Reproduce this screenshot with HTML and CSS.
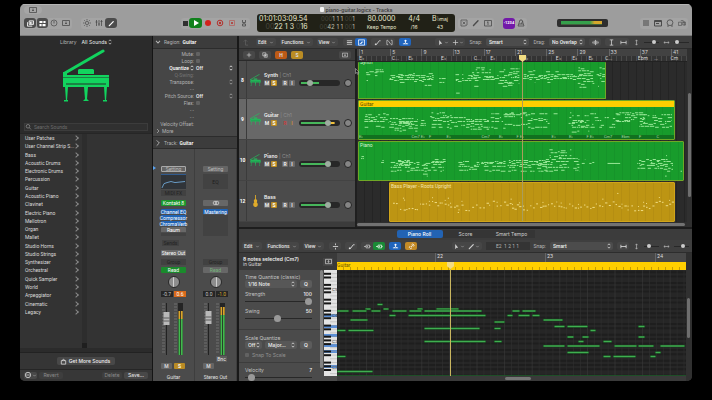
FILE: index.html
```html
<!DOCTYPE html>
<html lang="en">
<head>
<meta charset="utf-8">
<title>piano-guitar.logicx - Tracks</title>
<link rel="stylesheet" href="styles.css">
</head>
<body>
<svg class="sprite" aria-hidden="true">
  <symbol id="piano" viewBox="0 0 48 54"><path d="M3 24 41 2" stroke="currentColor" stroke-width="3" stroke-linecap="round"/><path fill="currentColor" d="M1 23h4v3H1zM16 21l1-1h14l1 1v4H16zM1 26h46v12H1zM3 38h3l-1 14H4zM22 38h4l-1 12 2 2h-6l2-2zM42 38h3l-1 14h-1zM2 51h4v1.500H2zM41 51h4v1.500h-4z"/><path stroke="#24302a" d="M4 35h40" stroke-width="1.200"/><path stroke="#24302a" d="M1 28.500h46" stroke-width=".5"/></symbol>
  <symbol id="bass" viewBox="0 0 10 14"><path fill="currentColor" d="M4.500 0h1v5C7.500 5 7 8 6.400 8.500 8.500 10 8 14 5 14S1.500 10 3.600 8.500C3 8 2.500 5 4.500 5z"/></symbol>
  <symbol id="updown" viewBox="0 0 4 6"><path d="M.7 2.200 2 .8l1.300 1.400M.7 3.800 2 5.200l1.300-1.400" fill="none" stroke="currentColor" stroke-width=".7"/></symbol>
  <symbol id="down" viewBox="0 0 6 6"><path d="M1.500 2.200 3 3.800l1.500-1.600" fill="none" stroke="currentColor" stroke-width=".8"/></symbol>
  <symbol id="right" viewBox="0 0 4 6"><path d="M1 1l2 2-2 2" fill="none" stroke="currentColor" stroke-width=".7"/></symbol>
  <symbol id="inbox" viewBox="0 0 8 8"><path d="M.5 1.500h7v5h-7zM4 2.500v2.500M3 4l1 1 1-1" fill="none" stroke="currentColor" stroke-width=".8"/></symbol>
  <symbol id="library" viewBox="0 0 8 8"><path d="M2.500 1h5v4h-5z" fill="none" stroke="currentColor"/><path d="M.5 2.500v4.500h5.500M4 2v2.500M5.500 2v2.500" fill="none" stroke="currentColor"/></symbol>
  <symbol id="inspector" viewBox="0 0 8 8"><path d="M.5 1h3.500v2.500H.5zM5 1h2.500v2.500H5zM.5 4.500H3V7H.5zM4 4.500h3.500V7H4z" fill="currentColor"/></symbol>
  <symbol id="clock" viewBox="0 0 8 8"><circle cx="4" cy="4" r="3" fill="none" stroke="currentColor" stroke-width=".7"/><path d="M4 2v2.500" stroke="currentColor" stroke-width=".8"/></symbol>
  <symbol id="sun" viewBox="0 0 8 8"><circle cx="4" cy="4" r="1.600" fill="none" stroke="currentColor" stroke-width=".7"/><path d="M4 0v1.500M4 6.500V8M0 4h1.500M6.500 4H8M1.200 1.200l1 1M5.800 5.800l1 1M1.200 6.800l1-1M5.800 2.200l1-1" stroke="currentColor" stroke-width=".7"/></symbol>
  <symbol id="mixer" viewBox="0 0 8 8"><path d="M1.500 1v6M4 1v6M6.500 1v6M.5 3h2M3 5h2M5.500 2.500h2" stroke="currentColor" stroke-width=".8"/></symbol>
  <symbol id="pencil" viewBox="0 0 8 8"><path d="M1.500 6.500 6 1.800" stroke="currentColor" stroke-width="1.400" stroke-linecap="round"/></symbol>
  <symbol id="metronome" viewBox="0 0 8 8"><path d="M3 1h2l2 6H1zM4 5l2-3M2 5h4" fill="none" stroke="currentColor" stroke-width=".8"/></symbol>
  <symbol id="tuner" viewBox="0 0 8 8"><path d="M2.500 1v2.500h3V1M4 3.500V5M2.500 7V5h3v2z" fill="none" stroke="currentColor" stroke-width=".8"/></symbol>
  <symbol id="clear" viewBox="0 0 8 8"><path d="M1 1h6v5L5 7H1zM2.700 2.700l2.600 2.600M5.300 2.700 2.700 5.300" fill="none" stroke="currentColor" stroke-width=".7"/></symbol>
  <symbol id="lines" viewBox="0 0 8 8"><path d="M1 2h6M1 4h6M1 6h6" stroke="currentColor"/></symbol>
  <symbol id="blocks" viewBox="0 0 8 8"><path d="M.5 1h7v6h-7z" fill="none" stroke="currentColor" stroke-width=".9"/><path d="M2 5h2V3.500h2" stroke="currentColor" fill="none"/></symbol>
  <symbol id="note" viewBox="0 0 8 8"><path d="M.5 1.500h7v5.500h-7zM.5 2.500h7M2 4.500h3" fill="none" stroke="currentColor"/></symbol>
  <symbol id="solo" viewBox="0 0 8 8"><path d="M.5 1.500h7v5.500h-7zM4 2.500v3.500M3 3.200h1" fill="none" stroke="currentColor" stroke-width=".8"/></symbol>
  <symbol id="loop" viewBox="0 0 8 8"><circle cx="4" cy="3.700" r="2.900" fill="none" stroke="currentColor" stroke-width=".8"/><path d="M1 7h2M5 7h2" stroke="currentColor" stroke-width=".8"/></symbol>
  <symbol id="media" viewBox="0 0 10 8"><path d="M.5 3h4v4h-4zM3.500 1h3v3M6 3h3.500v3.500H6zM8 2v5" fill="none" stroke="currentColor" stroke-width=".8"/></symbol>
  <symbol id="curve" viewBox="0 0 8 8"><path d="M1 6h2l3-4h1.500" fill="none" stroke="currentColor" stroke-width="1"/><circle cx="2" cy="6" r="1" fill="currentColor"/></symbol>
  <symbol id="up" viewBox="0 0 8 8"><path d="M2 3l2-2 2 2M4 1v6h3" fill="none" stroke="currentColor" stroke-width=".8"/></symbol>
  <symbol id="flex" viewBox="0 0 8 8"><path d="M2.500 1.500H1v5h1.500M5.500 1.500H7v5H5.500M2.500 2l3 4" fill="none" stroke="currentColor" stroke-width=".8"/></symbol>
  <symbol id="catch" viewBox="0 0 8 8"><circle cx="4" cy="2" r="1.200" fill="currentColor"/><path d="M4 2v2M1 5.500h6M2.500 5.500 4 4l1.500 1.500" stroke="currentColor" stroke-width=".9" fill="none"/></symbol>
  <symbol id="pointer" viewBox="0 0 8 8"><path d="M2.500 1v6l1.500-1.700h2z" fill="currentColor"/></symbol>
  <symbol id="cross" viewBox="0 0 8 8"><path d="M4 1v6M1 4h6" stroke="currentColor" stroke-width=".8"/></symbol>
  <symbol id="collapse" viewBox="0 0 8 8"><path d="M1 4h6M4 .5v2M4 5.500v2" stroke="currentColor" stroke-width=".9"/></symbol>
  <symbol id="wave" viewBox="0 0 8 8"><path d="M1 3v2M2.500 2v4M4 1v6M5.500 2v4M7 3v2" stroke="currentColor" stroke-width=".8"/></symbol>
  <symbol id="ibeam" viewBox="0 0 8 8"><path d="M2 1h4M2 7h4M4 1v6" stroke="currentColor" stroke-width=".9"/></symbol>
  <symbol id="hfit" viewBox="0 0 8 8"><path d="M1 2v4M7 2v4M1 4h6" stroke="currentColor" stroke-width=".9"/></symbol>
  <symbol id="vert" viewBox="0 0 8 8"><path d="M4 1v6M2.800 2.500 4 1l1.200 1.500M2.800 5.500 4 7l1.200-1.500" fill="none" stroke="currentColor" stroke-width=".8"/></symbol>
  <symbol id="horiz" viewBox="0 0 8 8"><path d="M1 4h6M2.500 2.800 1 4l1.500 1.200M5.500 2.800 7 4 5.500 5.200" fill="none" stroke="currentColor" stroke-width=".8"/></symbol>
  <symbol id="midi" viewBox="0 0 10 8"><path d="M3 2h5v4H3z" fill="none" stroke="currentColor"/><path d="M0 4h3M5 3v2M8 4h1.500" stroke="currentColor"/></symbol>
  <symbol id="link" viewBox="0 0 8 8"><path d="M3.500 4.500l2-2M2.500 3.500l-1 1.500 1.500 1.500 1.500-1M4 2l1.500-1L7 2.500 6 4" fill="none" stroke="currentColor" stroke-width=".9"/></symbol>
  <symbol id="search" viewBox="0 0 8 8"><circle cx="3" cy="3.300" r="1.800" fill="none" stroke="currentColor" stroke-width=".7"/><path d="M4.300 4.600 6 6.500" stroke="currentColor" stroke-width=".7"/></symbol>
  <symbol id="bag" viewBox="0 0 8 8"><path d="M1.500 3h5v4h-5zM2.800 3c0-2 2.400-2 2.400 0" fill="none" stroke="currentColor" stroke-width=".8"/></symbol>
  <symbol id="more" viewBox="0 0 8 8"><circle cx="4" cy="4" r="2.700" fill="none" stroke="currentColor" stroke-width=".7"/><path d="M2.500 4h3" stroke="currentColor" stroke-dasharray=".8 .4"/></symbol>
  <symbol id="copy" viewBox="0 0 8 8"><path d="M1 1h4v4H1zM3 3h4v4H3zM5 4v2M4 5h2" fill="none" stroke="currentColor" stroke-width=".8"/></symbol>
</svg>

<div class="window">
  <header class="titlebar">
    <div class="title-row">
      <button class="proxy" aria-label="Account"><svg class="i"><use href="#inbox"/></svg></button>
      <h1><span class="doc"></span>piano-guitar.logicx - Tracks</h1>
    </div>
    <div class="controlbar">
      <div class="group views">
        <button class="on" aria-label="Library"><svg class="i"><use href="#library"/></svg></button>
        <button class="on" aria-label="Inspector"><svg class="i"><use href="#inspector"/></svg></button>
        <button aria-label="Quick Help"><svg class="i"><use href="#clock"/></svg></button>
        <button aria-label="Toolbar"><svg class="i"><use href="#inbox"/></svg></button>
      </div>
      <div class="group panes">
        <button aria-label="Smart Controls"><svg class="i"><use href="#sun"/></svg></button>
        <button aria-label="Mixer"><svg class="i"><use href="#mixer"/></svg></button>
        <button class="on" aria-label="Editors"><svg class="i"><use href="#pencil"/></svg></button>
      </div>
      <div class="group transport">
        <button class="halt" aria-label="Stop"><span class="stop"></span></button>
        <button class="play" aria-label="Play"><svg class="i" viewBox="0 0 8 8"><path d="M2 1l5 3-5 3z" fill="#fff"/></svg></button>
        <button aria-label="Record"><span class="rec"></span></button>
        <button aria-label="Allow Quick Punch-In"><svg class="i" viewBox="0 0 8 8"><circle cx="4" cy="4" r="2.800" fill="none" stroke="#b3312c"/><circle cx="4" cy="4" r="1.200" fill="#b3312c"/></svg></button>
        <button aria-label="Capture"><svg class="i" viewBox="0 0 8 8"><path d="M1.500 1.500h5v5h-5z" fill="none" stroke="#b46461" stroke-width=".8"/><circle cx="4" cy="4" r="1" fill="#b3312c"/></svg></button>
        <button aria-label="Tuner"><svg class="i"><use href="#tuner"/></svg></button>
      </div>
      <div class="lcd">
        <div class="pos"><b>01:01:03:09.54</b><b class="beats"><i>00</i>22 1 3 <i>0</i>16</b></div>
        <div class="loc"><span><i>000</i>1 1 1 <i>00</i>1</span><span><i>00</i>42 1 1 <i>00</i>1</span></div>
        <div class="cell"><b>80.0000</b><small>Keep Tempo</small></div>
        <div class="cell"><b>4/4</b><small>/16</small></div>
        <div class="cell"><b>B♭<small>maj</small></b><small>43</small></div>
        <svg class="i"><use href="#down"/></svg>
      </div>
      <div class="group modes">
        <button aria-label="Replace"><svg class="i"><use href="#clear"/></svg></button>
        <button aria-label="Pencil"><svg class="i"><use href="#pencil"/></svg></button>
        <button aria-label="Solo"><svg class="i"><use href="#solo"/></svg></button>
      </div>
      <div class="group count">
        <button class="countin">‹1234</button>
        <button aria-label="Metronome"><svg class="i"><use href="#metronome"/></svg></button>
      </div>
      <div class="master"><span></span></div>
      <div class="group right">
        <button aria-label="List"><svg class="i"><use href="#lines"/></svg></button>
        <button aria-label="Note Pad"><svg class="i"><use href="#note"/></svg></button>
        <button aria-label="Loops"><svg class="i"><use href="#loop"/></svg></button>
        <button aria-label="Browsers"><svg class="i"><use href="#media"/></svg></button>
      </div>
    </div>
  </header>

  <div class="body">
    <aside class="library">
      <div class="lib-head"><span>Library</span><button>All Sounds <svg class="ud"><use href="#updown"/></svg></button></div>
      <svg class="piano-art"><use href="#piano"/></svg>
      <label class="search"><svg class="i"><use href="#search"/></svg><input type="search" placeholder="Search Sounds" aria-label="Search Sounds"></label>
      <div class="browser">
        <ul>
          <li>User Patches</li><li>User Channel Strip S...</li><li>Bass</li><li>Acoustic Drums</li><li>Electronic Drums</li><li>Percussion</li><li>Guitar</li><li>Acoustic Piano</li><li>Clavinet</li><li>Electric Piano</li><li>Mellotron</li><li>Organ</li><li>Mallet</li><li>Studio Horns</li><li>Studio Strings</li><li>Synthesizer</li><li>Orchestral</li><li>Quick Sampler</li><li>World</li><li>Arpeggiator</li><li>Cinematic</li><li>Legacy</li>
        </ul>
        <div class="gutter"></div>
      </div>
      <div class="get"><button><svg class="i"><use href="#bag"/></svg>Get More Sounds</button></div>
      <div class="lib-foot"><button class="act" aria-label="Actions"><svg class="i"><use href="#more"/></svg><svg class="dn"><use href="#down"/></svg></button><button class="dim">Revert</button><button class="dim del">Delete</button><button>Save...</button></div>
    </aside>

    <aside class="inspector">
      <div class="insp-head"><svg class="i"><use href="#down"/></svg>Region: <b>Guitar</b></div>
      <div class="params">
        <div><label for="mute">Mute:</label><input type="checkbox" id="mute"></div>
        <div><label for="loop-on">Loop:</label><input type="checkbox" id="loop-on"></div>
        <div class="hot"><span>Quantize <svg class="ud"><use href="#updown"/></svg></span><b>Off</b><svg class="ud"><use href="#updown"/></svg></div>
        <div class="faint"><span>Q-Swing:</span></div>
        <div><span>Transpose:</span><b></b><svg class="ud"><use href="#updown"/></svg></div>
        <div><span>- -</span></div>
        <div><span>Pitch Source:</span><b>Off</b><svg class="ud"><use href="#updown"/></svg></div>
        <div><label for="flex-on">Flex:</label><input type="checkbox" id="flex-on"></div>
        <div><span>- -</span></div>
        <div><span>- -</span></div>
        <div><span>Velocity Offset:</span></div>
      </div>
      <div class="more"><svg class="ud"><use href="#right"/></svg>More</div>
      <div class="insp-head track-head"><svg class="i"><use href="#right"/></svg>Track: <b>Guitar</b></div>
      <div class="strips">
        <section class="strip current">
          <button class="setting ring">Setting</button>
          <svg class="eq" viewBox="0 0 25 14" preserveAspectRatio="none"><path d="M0 .5h25" stroke="#315b8f"/><path d="M1 13 3 9 6 8 10 7 14 8 24 7" fill="none" stroke="#6da3cf" stroke-width=".9"/></svg>
          <span class="slot">MIDI FX</span>
          <button class="inst">Kontakt 8</button>
          <div class="fx"><button>Channel EQ</button><button>Compressor</button><button>ChromaVerb</button><button class="grey">Raum</button></div>
          <span class="slot sends">Sends</span>
          <button class="grey out">Stereo Out</button>
          <span class="slot">Group</span>
          <button class="read">Read</button>
          <span class="knob"></span>
          <div class="vals"><span>-0.7</span><span class="clip">0.6</span></div>
          <div class="faders"><svg class="fader" viewBox="0 0 26 52" data-cap="15" data-level="8"></svg></div>
          <div class="ms"><button>M</button><button class="solo">S</button></div>
          <span class="name">Guitar</span>
        </section>
        <section class="strip">
          <button class="setting">Setting</button>
          <span class="eq empty">EQ</span>
          <span class="slot blank"></span>
          <button class="inst stereo" aria-label="Stereo format"><svg class="i" viewBox="0 0 8 8"><circle cx="3" cy="4" r="1.800" fill="none" stroke="#ddd" stroke-width=".7"/><circle cx="5" cy="4" r="1.800" fill="none" stroke="#ddd" stroke-width=".7"/></svg></button>
          <div class="fx"><button>Mastering</button></div>
          <span class="slot blank sends"></span>
          <span class="out"></span>
          <span class="slot">Group</span>
          <button class="read off">Read</button>
          <span class="knob"></span>
          <div class="vals"><span>0.0</span><span class="warn">-1.0</span></div>
          <div class="faders"><svg class="fader" viewBox="0 0 26 52" data-cap="14" data-level="4"></svg></div>
          <div class="ms"><button>M</button><span class="bnc">Bnc</span></div>
          <span class="name">Stereo Out</span>
        </section>
      </div>
    </aside>

    <main>
      <section class="tracks">
        <div class="toolbar main-bar">
          <svg class="i faint"><use href="#up"/></svg>
          <button class="first-menu">Edit <svg class="dn"><use href="#down"/></svg></button>
          <button>Functions <svg class="dn"><use href="#down"/></svg></button>
          <button>View <svg class="dn"><use href="#down"/></svg></button>
          <div class="seg after-menus"><button aria-label="Cells"><svg class="i"><use href="#lines"/></svg></button><button class="blue" aria-label="Tracks view"><svg class="i"><use href="#blocks"/></svg></button></div>
          <div class="seg"><button aria-label="Automation"><svg class="i"><use href="#curve"/></svg></button><button aria-label="Flex"><svg class="i"><use href="#flex"/></svg></button></div>
          <button class="blue wide" aria-label="Catch"><svg class="i"><use href="#catch"/></svg></button>
          <div class="seg tools"><button aria-label="Pointer tool"><svg class="i"><use href="#pointer"/></svg><svg class="dn"><use href="#down"/></svg></button><button aria-label="Marquee tool"><svg class="i"><use href="#cross"/></svg><svg class="dn"><use href="#down"/></svg></button></div>
          <label for="snap">Snap:</label><span class="sel grow"><select id="snap"><option>Smart</option></select><svg class="ud"><use href="#updown"/></svg></span>
          <label for="drag">Drag:</label><span class="sel drag"><select id="drag"><option>No Overlap</option></select><svg class="ud"><use href="#updown"/></svg></span>
          <button class="wide" aria-label="Waveform zoom"><svg class="i"><use href="#wave"/></svg></button>
          <div class="seg"><button aria-label="Fit height"><svg class="i"><use href="#ibeam"/></svg></button><button aria-label="Fit width"><svg class="i"><use href="#hfit"/></svg></button></div>
          <svg class="i"><use href="#vert"/></svg><input class="zoomer" type="range" aria-label="Vertical zoom" value="75">
          <svg class="i"><use href="#horiz"/></svg><input class="zoomer" type="range" aria-label="Horizontal zoom" value="10">
        </div>
        <div class="arrange">
          <div class="heads">
            <div class="head-bar"><button aria-label="Add track"><svg class="i"><use href="#cross"/></svg></button><button aria-label="Duplicate track"><svg class="i"><use href="#copy"/></svg></button><button class="h">H</button><button class="s">S</button><button class="cfg" aria-label="Configure"><svg class="i"><use href="#inbox"/></svg></button></div>
            <div class="track first"><span class="num">8</span><svg class="ico"><use href="#piano"/></svg><div class="info"><p><b>Synth</b> | Ch1</p><div class="ctl"><button>M</button><button class="solo">S</button><button class="gap">R</button><button>I</button><input type="range" aria-label="Synth volume" value="24" style="--lv:45%"><span class="pan"></span></div></div></div>
            <div class="track sel-track"><span class="num">9</span><svg class="ico"><use href="#piano"/></svg><div class="info"><p><b>Guitar</b> | Ch1</p><div class="ctl"><button>M</button><button class="solo">S</button><button class="gap red">R</button><button class="amber">I</button><input class="hotlevel" type="range" aria-label="Guitar volume" value="74" style="--lv:82%"><span class="pan"></span></div></div></div>
            <div class="track"><span class="num">10</span><svg class="ico"><use href="#piano"/></svg><div class="info"><p><b>Piano</b> | Ch1</p><div class="ctl"><button>M</button><button class="solo">S</button><button class="gap">R</button><button>I</button><input type="range" aria-label="Piano volume" value="74" style="--lv:68%"><span class="pan"></span></div></div></div>
            <div class="track"><span class="num">12</span><svg class="ico gold"><use href="#bass"/></svg><div class="info"><p><b>Bass</b></p><div class="ctl"><button>M</button><button class="solo">S</button><button class="gap">R</button><button>I</button><input type="range" aria-label="Bass volume" value="74" style="--lv:68%"><span class="pan"></span></div></div></div>
          </div>
          <div class="timeline">
            <div class="ruler"><span>1</span><span>5</span><span>9</span><span>13</span><span>17</span><span>21</span><span>25</span><span>29</span><span>33</span><span>37</span><span>41</span></div>
            <div class="chords"><span>E♭</span><span></span><span>C...</span><span>E♭</span><span></span><span>E♭</span><span></span><span>C...</span><span>E♭</span><span></span><span>E♭</span><span></span><span>E♭</span><span>E♭</span><span>E♭</span><span>C...</span><span></span><span>Ebm</span><span>...</span><span>Cm</span></div>
            <div class="lanes">
              <div class="region synth"><h2>Synth</h2><svg data-notes="synth" viewBox="359 63 247 37" preserveAspectRatio="none"></svg></div>
              <div class="region guitar"><h2>Guitar</h2><svg data-notes="guitar" viewBox="359 106 316 29" preserveAspectRatio="none"></svg><div class="chordline"><span>E♭</span><span></span><span></span><span>Cm7 E♭</span><span>F</span><span>E♭</span><span></span><span>Cm7</span><span>E♭</span><span>F E♭</span><span></span><span>E♭</span><span>E♭</span><span>F E♭</span><span>Cm7</span><span>Ebm</span><span>F</span><span>C</span></div></div>
              <div class="region piano"><h2>Piano</h2><svg data-notes="piano" viewBox="359 141 325 39" preserveAspectRatio="none"></svg></div>
              <div class="region bass"><h2>Bass Player - Roots Upright</h2><svg data-notes="bass" viewBox="390 181 285 40" preserveAspectRatio="none"></svg></div>
            </div>
            <div class="hscroll"><span></span></div>
            <div class="playhead"></div>
            <svg class="cursor" viewBox="0 0 5 7"><path d="M.5.5v5l1.200-1 1 2 .8-.4-.9-1.900H4z" fill="#111" stroke="#ddd" stroke-width=".5"/></svg>
          </div>
          <div class="vscroll"><span></span></div>
        </div>
      </section>

      <section class="editor">
        <nav class="tabs"><button class="active">Piano Roll</button><button>Score</button><button>Smart Tempo</button></nav>
        <div class="toolbar edit-bar">
          <button>Edit <svg class="dn"><use href="#down"/></svg></button>
          <button>Functions <svg class="dn"><use href="#down"/></svg></button>
          <button>View <svg class="dn"><use href="#down"/></svg></button>
          <button class="wide after-menus" aria-label="Collapse"><svg class="i"><use href="#collapse"/></svg></button>
          <button class="wide" aria-label="Automation"><svg class="i"><use href="#curve"/></svg></button>
          <div class="seg"><button aria-label="MIDI in"><svg class="i"><use href="#midi"/></svg></button><button class="green" aria-label="MIDI out"><svg class="i"><use href="#midi"/></svg></button></div>
          <button class="blue wide" aria-label="Catch"><svg class="i"><use href="#catch"/></svg></button>
          <button class="gold wide" aria-label="Link"><svg class="i"><use href="#link"/></svg></button>
          <div class="seg tools push"><button aria-label="Pointer tool"><svg class="i"><use href="#pointer"/></svg><svg class="dn"><use href="#down"/></svg></button><button aria-label="Pencil tool"><svg class="i"><use href="#pencil"/></svg><svg class="dn"><use href="#down"/></svg></button></div>
          <span class="readout">E2&nbsp; 1 2 1 1</span>
          <label for="esnap">Snap:</label><span class="sel esnap"><select id="esnap"><option>Smart</option></select><svg class="ud"><use href="#updown"/></svg></span>
          <button class="wide" aria-label="Fit width"><svg class="i"><use href="#hfit"/></svg></button>
          <svg class="i"><use href="#vert"/></svg><input class="zoomer" type="range" aria-label="Vertical zoom" value="30">
          <svg class="i"><use href="#horiz"/></svg><input class="zoomer" type="range" aria-label="Horizontal zoom" value="60">
        </div>
        <div class="roll">
          <div class="side">
            <div class="side-head"><div><b>8 notes selected (Cm7)</b><span>in Guitar</span></div><button aria-label="Configure"><svg class="i"><use href="#inbox"/></svg></button></div>
            <div class="side-body">
              <div class="form">
                <div class="blk tq"><label for="tq">Time Quantize (classic)</label>
                  <div class="row"><span class="sel grow"><select id="tq"><option>1/16 Note</option></select><svg class="ud"><use href="#updown"/></svg></span><button>Q</button></div>
                  <div class="row lab"><label for="st">Strength</label><output>100</output></div><input id="st" type="range" value="100">
                  <div class="row lab"><label for="sw">Swing</label><output>50</output></div><input id="sw" type="range" value="49"></div>
                <div class="blk sq"><label for="sc">Scale Quantize</label>
                  <div class="row"><span class="sel"><select id="sc"><option>Off</option></select><svg class="ud"><use href="#updown"/></svg></span><span class="sel grow"><select aria-label="Scale"><option>Major...</option></select><svg class="ud"><use href="#updown"/></svg></span><button>Q</button></div>
                  <label class="snapscale"><input type="checkbox">Snap To Scale</label></div>
                <div class="blk vel"><div class="row lab"><label for="ve">Velocity</label><output>7</output></div><input id="ve" type="range" value="5"></div>
              </div>
              <div class="side-scroll"><span></span></div>
              <svg class="keys" viewBox="0 0 13 106" preserveAspectRatio="none"></svg>
            </div>
          </div>
          <div class="grid">
            <div class="eruler"><span></span><span>22</span><span>23</span><span>24</span></div>
            <div class="ribbon">Guitar</div>
            <svg class="notes" viewBox="338 270 349 106" preserveAspectRatio="none"></svg>
            <div class="ehscroll"><span></span></div>
            <div class="eplayhead"></div>
          </div>
          <div class="vscroll ev"><span></span></div>
        </div>
      </section>
    </main>
  </div>
</div>
<script src="script.js"></script>
</body>
</html>
```
FILE: styles.css
```css
* { box-sizing: border-box; }
body { margin: 0; background: #000; color: #d6d6d6; font: 5px/6px Roboto, "Liberation Sans", sans-serif; }
h1, h2, p, ul { margin: 0; padding: 0; font: inherit; }
ul { list-style: none; }
button, select, input { margin: 0; padding: 0; border: 0; color: inherit; font: inherit; background: none; }
b { font-weight: 700; color: #f0f0f0; }
svg { display: block; flex: none; }
.sprite { position: absolute; width: 0; height: 0; }
.i { width: 8px; height: 8px; }
.ud { width: 4px; height: 6px; }
.dn { width: 5px; height: 5px; color: #a0a0a0; }
button { display: flex; align-items: center; justify-content: center; }

.window { display: flex; flex-direction: column; height: calc(100vh - 23px); margin: 4px 20px 19px; border-radius: 5px; overflow: hidden; background: #1c1c1c; }
.titlebar { flex: none; height: 32px; background: #9d9d9d; border-top: 1px solid #b4b4b4; border-bottom: 1px solid #7c7c7c; color: #4b4b4b; }
.title-row { display: grid; grid-template-columns: 40px 1fr 40px; align-items: center; height: 9px; }
.title-row h1 { display: flex; justify-content: center; align-items: center; gap: 2px; font-family: Inter, sans-serif; font-weight: 600; color: #3b3b3b; }
.proxy { margin-left: 4px; height: 8px; width: 18px; border-radius: 4px; background: #a6a6a6; }
.doc { width: 4px; height: 5px; background: #f2f2f2; border-radius: 1px; }
.controlbar { display: flex; align-items: center; height: 18px; padding: 0 4px; }
.group { display: flex; align-items: center; height: 11px; border-radius: 3px; background: #a4a4a4; }
.group button { width: 12px; height: 10px; border-radius: 3px; }
.group .on { background: #4c4c4c; color: #fff; }
.group .on .i { width: 7px; height: 7px; }
.views { width: 48px; }
.views .on + .on { border-left: 1px solid #9d9d9d; }
.panes { margin-left: 9px; }
.transport { margin-left: 64px; }
.group .halt { width: 8px; }
.group .play { width: 13px; background: #10811c; }
.stop { width: 5px; height: 5px; background: #303030; }
.rec { width: 6px; height: 6px; border-radius: 50%; background: #d2221c; }
.lcd { display: flex; align-items: center; gap: 12px; flex: none; width: 198px; height: 18px; margin-left: 7px; padding: 0 1px 0 2px; border-radius: 3px; background: #212117; color: #e9e9cf; font: 7px/8px Inter, sans-serif; }
.lcd b { font-weight: 400; color: inherit; }
.lcd i { font-style: normal; color: #47473d; }
.pos, .loc, .cell { display: flex; flex-direction: column; white-space: nowrap; }
.loc { align-items: flex-end; color: #bdbda8; font-size: 6px; width: 44px; }
.pos { align-items: flex-end; width: 50px; }
.cell { align-items: center; }
.cell small { font-size: 5px; }
.lcd > svg { margin-left: auto; }
.modes { margin-left: 3px; }
.count { margin-left: 9px; }
.group .countin { background: #7219a8; color: #fff; font-weight: 700; font-size: 4px; height: 11px; }
.master { display: flex; align-items: center; width: 51px; height: 8px; margin-left: 30px; padding: 0 4px; background: #2e2e2e; border-radius: 2px; }
.master span { width: 41px; height: 4px; background: linear-gradient(90deg, #35a04b 70%, #d6a72c 82%); border-bottom: 1px solid #40613e; }
.right { margin-left: auto; }

.body { flex: 1; min-height: 0; display: grid; grid-template-columns: 133px 86px minmax(0, 1fr); grid-template-rows: minmax(0, 1fr); }

.library { display: flex; flex-direction: column; min-height: 0; background: #2b2b2b; border-right: 1px solid #151515; }
.lib-head { display: flex; justify-content: center; gap: 5px; padding: 3px 0 0; color: #b5b5b5; font-family: Inter, sans-serif; }
.lib-head button { gap: 1px; font-weight: 500; color: #ddd; }
.piano-art { width: 48px; height: 54px; margin: 4px auto 0; color: #12d35e; }
.search { display: flex; align-items: center; height: 8px; margin: 20px 4px 2px 4px; border: 1px solid #3c3c3c; background: #303030; color: #909090; }
.search input { flex: 1; min-width: 0; height: 6px; margin-left: 1px; outline: 0; appearance: none; }
.search input::placeholder { color: #6d6d6d; opacity: 1; }
.browser { flex: 1; min-height: 0; overflow: hidden; display: grid; grid-template-columns: 62px 5px 1fr; grid-template-rows: minmax(0, 1fr); background: #333; border-top: 1px solid #262626; }
.browser ul { display: grid; grid-auto-rows: 1fr; height: 182px; color: #dcdcdc; }
.browser li { display: flex; align-items: center; padding: 0 6px 0 5px; white-space: nowrap; }
.browser li::after { content: ""; width: 3px; height: 3px; margin-left: auto; border: solid #8a8a8a; border-width: 1px 1px 0 0; transform: rotate(45deg); }
.gutter { background: #2d2d2d; border-bottom: 5px solid #1f1f1f; }
.get { display: flex; justify-content: center; padding: 4px 0; margin-top: 4px; border-top: 1px solid #222; background: #353535; flex: none; }
.get button { gap: 2px; height: 8px; padding: 0 5px 0 3px; border-radius: 2px; background: #484848; color: #eee; font-family: Inter, sans-serif; font-weight: 500; }
.get .i { width: 7px; height: 7px; }
.lib-foot { display: flex; align-items: center; gap: 2px; flex: none; height: 12px; padding: 0 4px 1px 4px; border-top: 1px solid #262626; background: #373737; font-family: Inter, sans-serif; }
.lib-foot button { height: 7px; width: 24px; border-radius: 2px; background: #484848; color: #eee; }
.lib-foot .act { width: 13px; }
.lib-foot .dim { background: #3e3e3e; color: #8b8b8b; }
.lib-foot .del { margin-left: auto; width: 20px; }

.inspector { display: flex; flex-direction: column; min-height: 0; background: #464646; border-right: 2px solid #191919; color: #b3b3b3; }
.insp-head { display: flex; align-items: center; gap: 2px; height: 13px; padding-left: 1px; background: #3c3c3c; border-bottom: 1px solid #2c2c2c; flex: none; }
.insp-head b { font-weight: 700; }
.params { padding-top: 1px; }
.params > div { display: grid; grid-template-columns: 41px 1fr 8px; column-gap: 2px; align-items: center; height: 7px; }
.params > div > :first-child { display: flex; gap: 1px; justify-content: flex-end; white-space: nowrap; }
.params b { font-weight: 500; }
.params .hot { color: #fff; font-weight: 500; }
.params .faint { color: #757575; }
input[type=checkbox] { appearance: none; width: 4px; height: 4px; background: #626262; border-radius: 1px; }
.more { display: flex; gap: 2px; height: 9px; padding: 1px 3px; }
.track-head { height: 13px; border-top: 1px solid #2c2c2c; }
.strips { flex: 1; min-height: 0; display: grid; grid-template-columns: 1fr 1fr; background: #4b4b4b; }
.strip { position: relative; display: flex; flex-direction: column; align-items: center; padding-top: 17px; border-right: 1px solid #3e3e3e; text-align: center; }
.current::before { content: ""; position: absolute; left: 0; top: 17px; border: solid transparent; border-width: 2px 0 2px 3px; border-left-color: #5aa2ee; }
.strip > *, .fx button { flex: none; width: 25px; }
.strip button { height: 6px; border-radius: 1px; color: #fff; white-space: nowrap; }
.strip .setting { background: #656565; color: #bbb; }
.strip .ring { outline: 1px solid #a9a9a9; outline-offset: -1px; }
.eq { height: 15px; margin-top: 2px; background: #303439; }
.eq.empty { background: #424242; padding-top: 5px; color: #1e1e1e; }
.slot { height: 6px; background: #414141; color: #232323; margin-top: 1px; }
.slot.blank { background: none; }
.strip .inst { margin-top: 4px; background: #1b982c; }
.strip .inst.stereo { background: #676767; }
.fx { height: 27px; margin-top: 3px; background: #424242; }
.fx button { background: #1f63b5; border-bottom: 1px solid #4b4b4b; }
.strip .grey { background: #686868; }
.strip .sends { margin-top: 4px; width: 17px; align-self: flex-start; margin-left: 9px; }
.strip .out { height: 6px; margin: 4px 0 2px; }
.strip .read { margin-top: 2px; background: #1a8b2c; height: 6px; }
.strip .read.off { background: #676767; color: #76b57c; }
.strip .knob { width: 12px; height: 12px; margin-top: 3px; border-radius: 50%; border: 1px solid #2b2b2b; background: linear-gradient(90deg, #8d8d8d 45%, #d0d0d0 45% 55%, #8d8d8d 55%); }
.vals { display: flex; gap: 1px; margin-top: 3px; }
.vals span { flex: 1; background: #262626; color: #c5c5c5; height: 6px; }
.vals .clip { background: #d86a1b; color: #fff; }
.vals .warn { color: #d6a72c; }
.faders { margin-top: 6px; height: 52px; }
.fader { width: 26px; height: 52px; }
.ms { display: flex; gap: 2px; margin-top: 8px; height: 6px; align-items: center; }
.ms button { width: 11px; background: #656565; color: #ddd; font-weight: 600; }
.ms .solo, .ctl .solo { background: #b98b24; color: #fff; }
.bnc { width: 11px; height: 6px; margin-top: -14px; background: #5c5c5c; color: #eee; }
.strip .name { width: 100%; margin-top: 5px; color: #e0e0e0; }

main { display: flex; flex-direction: column; min-width: 0; min-height: 0; background: #3a3a3a; }
.tracks, .editor { display: flex; flex-direction: column; }
.toolbar { display: flex; align-items: center; gap: 4px; height: 13px; padding: 0 3px; background: #3f3f3f; border-bottom: 1px solid #2d2d2d; color: #b5b5b5; white-space: nowrap; flex: none; }
.toolbar > button { gap: 2px; height: 8px; padding: 0 2px; border-radius: 2px; background: #464646; color: #e4e4e4; font-weight: 500; }
.main-bar .first-menu { margin-left: 3px; }
.seg { display: flex; background: #464646; border-radius: 2px; color: #d0d0d0; }
.seg button { width: 12px; height: 8px; border-radius: 2px; }
.after-menus { margin-left: 1px; }
.toolbar .i { width: 7px; height: 7px; }
.toolbar .blue { background: #2165bd; color: #fff; }
.toolbar .green { background: #1a8b36; color: #fff; }
.toolbar .gold { background: #c38a26; color: #fff; }
.toolbar .wide { width: 12px; padding: 0; }
.tools { margin-left: 20px; }
.tools button { width: 15px; }
.push { margin-left: auto; }
.toolbar .faint { opacity: .3; }
.sel { display: flex; align-items: center; height: 8px; border-radius: 2px; background: #4c4c4c; color: #eee; padding-right: 2px; }
.sel select { appearance: none; flex: 1; min-width: 0; height: 8px; padding-left: 3px; font-weight: 500; outline: 0; }
.grow { flex: 1; min-width: 0; }
.drag { width: 36px; }
.esnap { width: 63px; }
.readout { width: 44px; height: 8px; line-height: 8px; text-align: center; background: #343434; }
input[type=range] { appearance: none; display: block; height: 8px; min-width: 0; background: linear-gradient(#282828, #282828) center / 100% 1px no-repeat; }
input[type=range]::-webkit-slider-thumb { appearance: none; width: 7px; height: 7px; border-radius: 50%; background: #999; }
.zoomer { width: 15px; }
.toolbar .zoomer::-webkit-slider-thumb { width: 4px; height: 4px; background: #ccc; }

.arrange { display: grid; grid-template-columns: 118px minmax(0, 1fr) 5px; height: 178px; background: #292929; }
.heads { border-right: 2px solid #1f1f1f; background: #3b3b3b; }
.head-bar { display: flex; align-items: center; gap: 4px; height: 12px; padding: 0 4px; border-bottom: 1px solid #2a2a2a; }
.head-bar button { width: 12px; height: 8px; border-radius: 2px; background: #484848; color: #ddd; font-weight: 700; }
.head-bar .h { background: #bd5a16; }
.head-bar .s { background: #ba8c24; }
.head-bar .cfg { margin-left: auto; }
.head-bar .i { width: 6px; height: 6px; }
.track { display: flex; align-items: center; height: 41px; background: #4b4b4b; border-bottom: 1px solid #434343; }
.track.first { height: 38px; }
.sel-track { background: #686868; }
.num { width: 8px; align-self: stretch; display: grid; place-items: center; border-right: 1px solid #3b3b3b; color: #fff; font-weight: 700; }
.ico { width: 11px; height: 12px; margin: 0 3px; color: #22c35e; }
.ico.gold { color: #e0ab2a; }
.info p { color: #8d8d8d; font-family: Inter, sans-serif; }
.info b { font-weight: 600; }
.ctl { display: flex; align-items: center; gap: 1px; margin-top: 1px; }
.ctl button { width: 6px; height: 6px; border-radius: 1px; background: #6a6a6a; color: #eee; font-weight: 700; }
.ctl .gap { margin-left: 4px; }
.ctl .red { color: #c44040; }
.ctl .amber { color: #c48b40; }
.ctl input { width: 41px; height: 6px; margin: 0 3px; border-radius: 3px; --hot: #47b65b; background: linear-gradient(90deg, #47b65b 70%, var(--hot) 85%) 2px 2px / var(--lv) 2px no-repeat #272727; }
.ctl .hotlevel { --hot: #f0c03c; }
.ctl input::-webkit-slider-thumb { width: 6px; height: 6px; background: #9dab9f; }
.pan { width: 8px; height: 8px; border-radius: 50%; border: 1px solid #242424; background: #858585; }

.timeline { position: relative; display: flex; flex-direction: column; min-width: 0; background: repeating-linear-gradient(90deg, #2b2b2b 0 7px, #242424 7px 8px); }
.ruler { display: grid; grid-template-columns: repeat(10, 1fr) 16px; height: 7px; padding-left: 2px; background: #424242; color: #d2d2d2; }
.ruler span { border-left: 1px solid #666; padding-left: 1px; line-height: 7px; font-family: Inter, sans-serif; }
.chords { display: grid; grid-template-columns: repeat(20, 1fr); height: 6px; padding-left: 2px; color: #d8d8d8; line-height: 5px; background: repeating-linear-gradient(90deg, #333 0 4px, #4a4a4a 4px 5px); border-bottom: 1px solid #222; overflow: hidden; }
.chords span { white-space: nowrap; width: 16px; }
.lanes { display: flex; flex-direction: column; gap: 1px; }
.region { position: relative; display: flex; flex-direction: column; height: 40px; border-radius: 1px; overflow: hidden; background: repeating-linear-gradient(90deg, #189c2c 0 7px, #16942a 7px 8px); border: 1px solid #6fa726; }
.region h2 { height: 6px; padding-left: 1px; line-height: 6px; color: #d9f5d4; font-weight: 400; flex: none; }
.region svg { width: 100%; }
.synth { height: 37px; margin: 0 81px 0 1px; border-top-width: 0; }
.synth h2 { margin: -3px 0 -3px; }
.synth svg { height: 36px; }
.guitar { margin: 0 12px 0 1px; height: 40px; }
.guitar h2 { background: #ffcf00; color: #5a4a00; }
.guitar svg { height: 28px; }
.chordline { display: grid; grid-template-columns: repeat(18, 1fr); height: 4px; background: #11701f; color: #a9dca9; font-size: 4px; line-height: 4px; white-space: nowrap; }
.piano { margin: 0 3px 0 1px; }
.piano svg, .bass svg { height: 38px; margin-top: -6px; }
.bass { margin: 0 12px 0 32px; background: repeating-linear-gradient(90deg, #bd9513 0 7px, #b58e12 7px 8px); border-color: #d1a51a; }
.bass h2 { color: #f5e6b0; }
.hscroll { display: flex; align-items: center; flex: 1; background: #2f2f2f; }
.hscroll span { flex: 1; height: 3px; margin-right: 2px; background: #727272; border-radius: 2px; }
.playhead { position: absolute; left: 50%; top: 6px; bottom: 6px; width: 1px; background: #a99d5b; }
.playhead::before, .eplayhead::before { content: ""; position: absolute; left: -3px; top: 0; width: 7px; height: 7px; background: #f1dc82; clip-path: polygon(0 0, 100% 0, 100% 60%, 50% 100%, 0 60%); }
.cursor { position: absolute; left: -2px; top: 19px; width: 5px; height: 7px; }
.vscroll { background: #303030; padding: 44px 1px 0; }
.vscroll span { display: block; height: 104px; border-radius: 2px; background: #6e6e6e; }

.editor { flex: 1; min-height: 0; border-top: 2px solid #1d1d1d; }
.tabs { display: flex; justify-content: center; flex: none; height: 11px; padding-top: 1px; background: #3c3c3c; }
.tabs button { width: 46px; height: 8px; background: #353535; color: #cfcfcf; font-family: Inter, sans-serif; }
.tabs .active { border-radius: 2px; background: #2263b3; color: #fff; font-weight: 500; }
.roll { flex: 1; min-height: 0; display: grid; grid-template-columns: 98px minmax(0, 1fr) 6px; grid-template-rows: minmax(0, 1fr); }
.side { display: flex; flex-direction: column; min-height: 0; }
.side-head { display: flex; align-items: center; justify-content: space-between; height: 17px; padding: 0 4px 0 4px; background: #3a3a3a; flex: none; white-space: nowrap; }
.side-head b { font-weight: 600; font-family: Inter, sans-serif; }
.side-head span { display: block; line-height: 5px; }
.side-head button { width: 10px; height: 8px; background: #444; }
.side-head .i { width: 7px; height: 7px; }
.side-body { flex: 1; min-height: 0; display: grid; grid-template-columns: 81px 3px 14px; grid-template-rows: minmax(0, 1fr); background: #4b4b4b; overflow: hidden; font-family: Inter, sans-serif; }
.form { color: #c5c5c5; }
.blk { padding: 3px 8px 0 6px; border-bottom: 1px solid #3c3c3c; }
.tq { height: 60px; }
.sq { height: 33px; padding-top: 4px; }
.blk > label, .blk .lab { display: flex; height: 7px; align-items: center; }
.row { display: flex; align-items: center; gap: 3px; }
.row button { width: 12px; height: 8px; background: #5c5c5c; border-radius: 2px; color: #eee; font-weight: 600; }
.side .sel { background: #575757; }
.lab { justify-content: space-between; margin-top: 2px; }
.lab output { color: #f0f0f0; font-weight: 500; }
.vel { padding-top: 1px; border-bottom: 0; }
.blk input[type=range] { width: 100%; }
.blk .snapscale { gap: 3px; margin-top: 2px; color: #929292; }
.side-scroll span { display: block; width: 3px; height: 98px; background: #828282; border-radius: 2px; }
.keys { width: 13px; height: 106px; margin-left: 1px; }
.grid { position: relative; display: flex; flex-direction: column; min-height: 0; }
.eruler { display: grid; grid-template-columns: 98px 110px 110px 1fr; height: 9px; flex: none; background: #484848; color: #ddd; font-family: Inter, sans-serif; }
.eruler span + span { border-left: 1px solid #666; padding-left: 1px; }
.ribbon { height: 8px; flex: none; padding-top: 1px; line-height: 5px; color: #6a5600; background: linear-gradient(#ffcf00 5px, transparent 5px), repeating-linear-gradient(90deg, #ffcf00 0 6px, #c79d00 6px 7px); }
.notes { width: 100%; height: 106px; background: #262626; }
.ehscroll { flex: 1; background: #3a3a3a; padding: 1px 0 0 48%; }
.ehscroll span { display: block; width: 26px; height: 3px; background: #777; border-radius: 2px; }
.eplayhead { position: absolute; left: 113px; top: 9px; bottom: 5px; width: 1px; background: #c9b65f; }
.ev { padding: 45px 2px 0 1px; }
.ev span { height: 40px; }
```
FILE: script.js
```js
// Runs of MIDI notes: [start, end, pitch rows, density]
const clips = {
  synth: [
    [366, 378, [73, 76], .6], [374, 384, [71, 73], .7], [362, 368, [81], .8],
    [389, 434, [77, 79, 81], .85], [395, 434, [75, 83], .4], [424, 434, [87], .4],
    [438, 446, [78, 80, 84, 89], .5], [455, 475, [76, 80, 82], .7], [455, 462, [86, 95], .3],
    [472, 492, [69, 71, 74, 80], .5], [470, 520, [77, 79, 81], .75], [474, 520, [84, 87], .25],
    [498, 520, [70, 73, 75, 85], .5], [523, 580, [76, 78, 80], .8], [524, 536, [72, 83], .5],
    [545, 560, [73, 83], .5], [578, 606, [69, 72, 75, 77, 80, 82], .6], [578, 600, [85, 88], .5]
  ],
  guitar: [
    [364, 389, [113, 116, 119, 121, 126], .7], [389, 418, [118, 121, 124, 127, 130], .7],
    [398, 412, [121, 122, 123, 125], .9], [420, 426, [119, 122, 125], .8],
    [430, 452, [112, 115, 117, 120, 124, 127], .65], [450, 466, [117, 121, 125], .7],
    [466, 490, [119, 121, 123, 126, 129], .75], [490, 506, [113, 117, 121, 127], .65],
    [504, 528, [112, 113, 114, 116, 124], .75], [528, 548, [113, 118, 120, 123, 127], .55],
    [548, 572, [112, 116, 123, 127], .4], [572, 590, [115, 119, 121, 122, 125, 127, 131], .8],
    [590, 616, [113, 117, 120, 124, 127], .6], [616, 646, [112, 114, 117, 119, 121], .75],
    [640, 673, [114, 117, 120, 123, 126], .65]
  ],
  piano: [
    [360, 364, [156, 158], .9], [381, 384, [157, 160, 161], .8], [389, 444, [162, 164, 167, 170], .75],
    [398, 410, [160, 161, 163, 165], .95], [422, 428, [165, 168, 173, 176], .6],
    [432, 446, [159, 161], .8], [458, 480, [161, 164, 166, 169], .75], [480, 506, [161, 163, 166, 170], .85],
    [508, 548, [160, 162, 164, 165, 167, 170], .75], [545, 580, [158, 161, 164, 167, 170], .7],
    [550, 572, [149, 151, 155, 157], .55], [582, 586, [159, 162], .7], [588, 595, [162], 1],
    [608, 621, [162], 2], [638, 674, [159, 161, 163, 165, 168], .75], [640, 683, [171, 164], .4], [655, 668, [155, 176], .3]
  ],
  bass: []
};

let seed = 11;
const rnd = () => (seed = (seed * 16807) % 2147483647) / 2147483647;

function dash(x, y, w) { return `M${x.toFixed(1)} ${y.toFixed(1)}h${w.toFixed(1)}`; }

document.querySelectorAll("svg[data-notes]").forEach(svg => {
  const kind = svg.dataset.notes;
  let d = "";
  for (const [a, b, rows, fill] of clips[kind]) {
    for (const y of rows) {
      let x = a + rnd() * 2;
      while (x < b) {
        const w = fill > 1 ? b - a : 1 + rnd() * 4;
        if (rnd() < fill) d += dash(x, y + (rnd() < .3 ? 1 : 0), Math.min(w, b - x));
        x += w + .7;
      }
    }
  }
  if (kind === "bass") {
    for (let x = 393; x < 673; x += 2 + rnd() * 2) {
      const y = 205 + Math.sin(x / 9) * 2.500 + (rnd() - .5) * 6;
      d += dash(x, y, 1 + rnd() * 1.500);
      if (rnd() < .25) d += dash(x, y - 4, 1);
    }
    for (const [x, y] of [[403, 197], [404, 199], [448, 197], [511, 198], [603, 198], [618, 192], [458, 212]]) d += dash(x, y, 1.200);
  }
  const color = kind === "bass" ? "#f8e795" : "#a9f2a5";
  svg.innerHTML = `<path d="${d}" stroke="${color}" stroke-width="1" opacity=".9"/>`;
});

// Piano roll notes: pitch row, then start/end pairs
const rows = [
  [304.500, [378, 384]],
  [309, [366, 372, 384, 390, 418, 424, 437, 460]],
  [311, [338, 350, 353, 368, 372, 382, 393, 408, 410, 423, 425, 483, 513, 521, 523, 537]],
  [315.500, [390, 397, 409, 487, 508, 514, 519, 531, 533, 541]],
  [320, [351, 369, 544, 564]],
  [322, [495, 506]],
  [326.500, [555, 566, 568, 589, 639, 646]],
  [328.500, [425, 481, 495, 502]],
  [330.500, [338, 347, 349, 375, 591, 597]],
  [337, [568, 575, 583, 590, 639, 646]],
  [341.500, [425, 487, 495, 503, 579, 585, 604, 613]],
  [346, [544, 566, 568, 601, 615, 638, 639, 655, 661, 686]],
  [352.500, [568, 590, 656, 662]],
  [356.500, [338, 347, 604, 612, 614, 637, 651, 657]],
  [371.500, [338, 374]]
];
let out = "";
for (let y = 270, n = 0; y < 376; y += 2.160, n++) {
  if ([1, 3, 6, 8, 10].includes(n % 12)) out += `<path d="M338 ${y}h349" stroke="#1e1e1e" stroke-width="2"/>`;
}
for (let x = 340, n = 0; x < 687; x += 6.900, n++) out += `<path d="M${x} 270v106" stroke="${n % 4 ? "#303030" : "#3d3d3d"}" stroke-width=".6"/>`;
for (const [y, p] of rows) {
  for (let k = 0; k < p.length; k += 2) out += `<path d="M${p[k]} ${y}H${p[k + 1]}" stroke="#143a1a" stroke-width="2.600"/><path d="M${p[k] + .5} ${y}H${p[k + 1] - .5}" stroke="#3fae50" stroke-width="1.400"/>`;
}
out += `<path d="M338 375.500h349" stroke="#1e5a2a" stroke-width=".8"/>`;
document.querySelector(".notes").innerHTML = out;

// Keyboard: four octaves, with the selected chord's keys tinted
let keys = `<path fill="#e4e4e4" d="M0 0h13v106H0z"/>`;
for (const y of [45, 56, 65, 75, 81, 96]) keys += `<path fill="#5b8fd6" d="M0 ${y - 1}h13v3H0z"/>`;
for (let y = 3.700; y < 106; y += 3.700) keys += `<path d="M6 ${y}h7" stroke="#999" stroke-width=".4"/>`;
for (let y = 2, n = 0; y < 106; y += 3.700, n++) if (n % 7 !== 2 && n % 7 !== 6) keys += `<path fill="#151515" d="M0 ${y + .8}h7v2H0z"/>`;
["C5", "C4", "C3", "C2"].forEach((t, n) => { keys += `<text x="8" y="${21 + n * 26}" font-size="4" fill="#444">${t}</text>`; });
document.querySelector(".keys").innerHTML = keys;

document.querySelectorAll(".fader").forEach(svg => {
  const cap = +svg.dataset.cap, top = +svg.dataset.level;
  let s = "";
  for (let y = 1; y < 52; y += 3) s += `<path d="M1 ${y}h3M13 ${y}h3" stroke="#8a8a8a" stroke-width=".6"/>`;
  s += `<path d="M5.500 0v52" stroke="#222"/><path fill="#242424" d="M17 0h5v52h-5z"/>`;
  s += `<path fill="#dba52b" d="M17.500 ${top}h1.700v8h-1.700zM20 ${top}h1.700v8H20z"/><path fill="#42b94e" d="M17.500 ${top + 8}h1.700V52h-1.700zM20 ${top + 8}h1.700V52H20z"/>`;
  s += `<path fill="#b9b9b9" d="M2.500 ${cap - 6}h6v13h-6z"/><path d="M2.500 ${cap}h6M2.500 ${cap + 3}h6" stroke="#444" stroke-width=".8"/>`;
  svg.innerHTML = s;
});
```
